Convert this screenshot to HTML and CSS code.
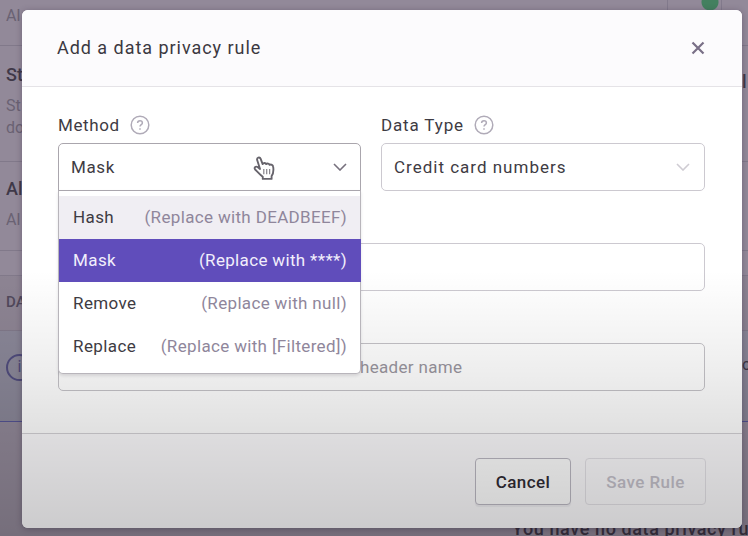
FILE: index.html
```html
<!DOCTYPE html>
<html lang="en">
<head>
<meta charset="utf-8">
<title>Add a data privacy rule</title>
<link rel="stylesheet" href="styles.css">
</head>
<body>
<div class="page">
  <section class="row row-a"><span>Al</span><i class="toggle"></i></section>
  <section class="row row-b"><h3>St<b class="edge">l</b></h3><p>St</p><p>do</p></section>
  <section class="row row-c"><h3>Al</h3><p>Al</p></section>
  <section class="row row-gap"></section>
  <section class="row row-d"><h4>DA</h4></section>
  <section class="row row-info"><span class="info">i</span><span class="edge-o">o</span></section>
  <section class="row-empty">You have no data privacy rules</section>
</div>

<div class="modal">
  <header class="modal-head">
    <h2 class="title">Add a data privacy rule</h2>
    <svg class="close" viewBox="0 0 14 14"><path d="M1.5 1.5 12.5 12.5M12.5 1.5 1.5 12.5"/></svg>
  </header>
  <main class="modal-body">
    <div class="fields">
      <div class="field">
        <div class="label"><span>Method</span>
          <svg class="help" viewBox="0 0 20 20"><circle cx="10" cy="10" r="8.8"/><path d="M7.6 8.1C7.6 6.6 8.6 5.7 10 5.7s2.4.9 2.4 2.2c0 1.7-2.4 1.8-2.4 3.6M10 13.2v1.5"/></svg>
        </div>
        <div class="select open"><span>Mask</span>
          <svg class="chev" viewBox="0 0 14 8"><path d="M1 1 7 7 13 1"/></svg>
          <div class="menu">
            <div class="option hover"><span>Hash</span><em>(Replace with DEADBEEF)</em></div>
            <div class="option active"><span>Mask</span><em>(Replace with ****)</em></div>
            <div class="option"><span>Remove</span><em>(Replace with null)</em></div>
            <div class="option"><span>Replace</span><em>(Replace with [Filtered])</em></div>
          </div>
        </div>
      </div>
      <div class="field">
        <div class="label"><span class="wide">Data Type</span>
          <svg class="help" viewBox="0 0 20 20"><circle cx="10" cy="10" r="8.8"/><path d="M7.6 8.1C7.6 6.6 8.6 5.7 10 5.7s2.4.9 2.4 2.2c0 1.7-2.4 1.8-2.4 3.6M10 13.2v1.5"/></svg>
        </div>
        <div class="select"><span class="wide">Credit card numbers</span>
          <svg class="chev pale" viewBox="0 0 14 8"><path d="M1 1 7 7 13 1"/></svg>
        </div>
      </div>
    </div>
    <div class="input"></div>
    <div class="input source"><span>header name</span></div>
  </main>
  <footer class="modal-foot">
    <button class="btn cancel"><span>Cancel</span></button>
    <button class="btn save"><span>Save Rule</span></button>
  </footer>
</div>

<svg class="cursor" viewBox="0 0 22 25"><path d="M7.2 13.5 4.5 5C3.7 2.5 6.9 1.4 7.8 3.8L9.7 8.7C10.5 7.3 12.6 7.4 13.1 8.8 14.2 7.7 16 8.1 16.4 9.5 17.9 8.7 19.6 9.6 19.8 11.2 20.4 15 20.2 17.8 18.3 20.3V23H9.8V21C7.3 19.1 5.4 16.8 2.7 14.2 1 12.4 3 10.4 4.8 11.6Z"/><path class="thin" d="M10.8 13.5v5M13.6 13.5v5M16.4 13.5v5"/></svg>
<div class="shade"></div>
</body>
</html>
```

FILE: styles.css
```css
* { box-sizing: border-box; margin: 0; padding: 0; }
body {
  width: 748px; height: 536px; overflow: hidden; position: relative;
  font-family: Roboto, "Liberation Sans", sans-serif;
  font-size: 17px; color: #3e3b43; background: #928999;
}
span, em, h2 { white-space: nowrap; }

.page { height: 536px; display: flex; flex-direction: column; color: #6a6273; overflow: hidden; }
.row { border-bottom: 1px solid #81798a; padding-left: 6px; flex: none; line-height: 22px; font-size: 16px; }
.row-a { height: 46px; padding-top: 5px; display: flex; justify-content: space-between; }
.toggle {
  width: 55px; height: 20px; margin: -11px 26px 0 0; border: 1px solid #827a8c;
  background: radial-gradient(circle at 42px 7px, #43805f 8px, transparent 9px);
}
.row-b { height: 116px; padding-top: 18px; }
.row h3 { font-size: 18px; font-weight: 500; color: #3f3848; display: flex; justify-content: space-between; margin-bottom: 9px; }
.row-b .edge { width: 6px; height: 22px; padding-top: 7px; font-weight: 500; }
.row-c { height: 89px; padding-top: 16px; }
.row-gap { height: 25px; }
.row-d { height: 55px; padding-top: 15px; background: #8d8493; }
.row-d h4 { font-size: 15px; font-weight: 500; color: #51495c; }
.row-info { height: 91px; padding-top: 23px; background: #8a8798; border-bottom-color: #545394; display: flex; justify-content: space-between; }
.info { width: 27px; height: 27px; border: 2px solid #504c7d; border-radius: 50%; text-align: center; color: #504c7d; }
.edge-o { width: 6px; color: #3f3848; }
.row-empty { flex: 1; padding: 97px 0 0 512px; line-height: 20px; font-size: 18px; font-weight: 500; letter-spacing: .6px; color: #3d3545; white-space: nowrap; }

.modal {
  position: absolute; left: 22px; top: 10px; width: 720px; height: 518px;
  display: flex; flex-direction: column; background: #fff;
  border-radius: 6px; box-shadow: 0 1px 6px rgba(45, 32, 60, .35); overflow: hidden;
}
.modal-head {
  height: 77px; padding: 0 37px 2px 35px; display: flex; align-items: center; justify-content: space-between;
  background: #fcfbfd; border-bottom: 1px solid #e5e3e7;
}
.title { font-size: 18px; font-weight: 400; color: #3b3841; letter-spacing: .96px; }
.close { width: 14px; height: 14px; margin-top: 2px; fill: none; stroke: #796f87; stroke-width: 2.2; }
.modal-body { height: 346px; padding: 26px 37px 0 36px; }
.fields { display: grid; grid-template-columns: 303px 324px; gap: 20px; }
.label { height: 24px; margin-bottom: 6px; display: flex; align-items: center; gap: 10px; }
.help { width: 20px; height: 20px; fill: none; stroke: #b0abb8; stroke-width: 1.5; }
.select {
  height: 48px; padding: 0 14px 0 12px; border: 1px solid #ccc9d0; border-radius: 5px;
  display: flex; align-items: center; justify-content: space-between; position: relative;
}
.open { border-color: #aaa6ad; border-radius: 5px 5px 0 0; padding-right: 13px; }
.chev { width: 14px; height: 8px; fill: none; stroke: #77717e; stroke-width: 1.6; }
.pale { stroke: #cfccd3; }
.menu {
  position: absolute; left: -1px; top: 46px; width: 303px; height: 184px; padding-top: 5px;
  background: #fff; border: 1px solid #b8b5bb; border-top-color: #aaa6ad;
  border-radius: 0 0 5px 5px; box-shadow: 0 2px 3px rgba(40, 30, 50, .12); z-index: 1;
}
.option { height: 42.8px; padding: 0 13px 0 14px; display: flex; align-items: center; justify-content: space-between; }
.option em { font-style: normal; color: #8f869b; letter-spacing: .34px; }
.hover { background: #f0eef3; }
.active, .active em { color: #f2effb; }
.active { background: #604dbb; margin-right: -1px; padding-right: 14px; }
.input { height: 48px; margin-top: 52px; border: 1px solid #ccc9d0; border-radius: 5px; display: flex; align-items: center; }
.source { padding-left: 301px; color: #99959e; border-color: #c5c3c8; }
.label span, .select > span { letter-spacing: .6px; }
.option span { letter-spacing: .4px; }
.input span { letter-spacing: .32px; }
.label .wide { letter-spacing: .85px; }
.select .wide { letter-spacing: 1px; }

.modal-foot { flex: 1; border-top: 1px solid #d4d2d6; background: #fcfbfd; display: flex; gap: 14px; padding: 24px 36px 0 453px; }
.btn { height: 47px; font: 500 17px Roboto, "Liberation Sans", sans-serif; letter-spacing: .45px; border: 1px solid #bcb9c3; border-radius: 4px; background: #fff; }
.cancel { width: 96px; color: #302c35; box-shadow: 0 2px 1px rgba(40, 30, 60, .06); }
.save { width: 121px; color: #c5c2cb; border-color: #e4e2e7; background: #fcfbfd; }

.cursor { position: absolute; left: 252px; top: 155px; width: 24px; height: 26px; fill: #fff; stroke: #66636b; stroke-width: 1.8; stroke-linejoin: round; }
.cursor .thin { stroke-width: 1.2; stroke: #8a878e; }
.shade { position: absolute; inset: 0; pointer-events: none; background: linear-gradient(to bottom, transparent 270px, rgba(0,0,0,.065) 370px, rgba(0,0,0,.12) 433px, rgba(0,0,0,.19) 528px, rgba(0,0,0,.2)); }
```
